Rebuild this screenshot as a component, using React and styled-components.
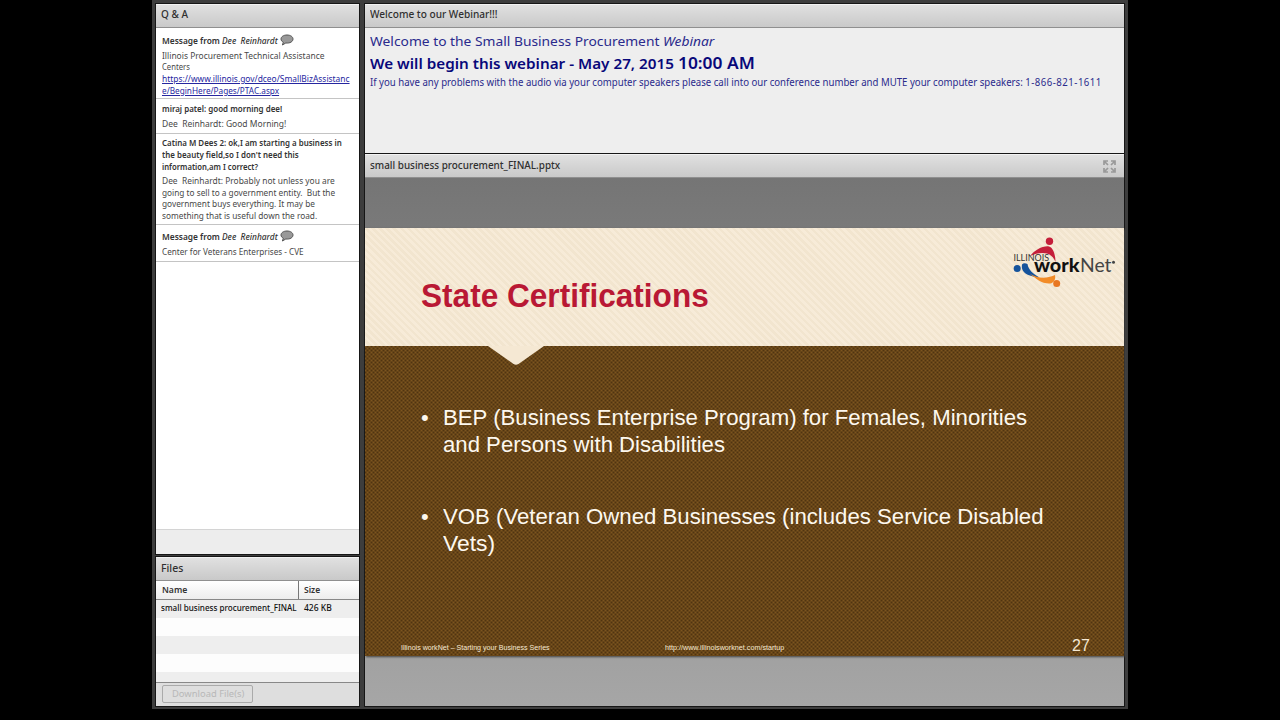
import React from "react";
import styled, { createGlobalStyle } from "styled-components";

const GlobalStyle = createGlobalStyle`
	* {
		box-sizing: border-box;
	}
	body {
		margin: 0;
		background: #000;
		font-family: "Noto Sans", "Open Sans", sans-serif;
	}
	h1, h2, p, ul {
		margin: 0;
		padding: 0;
		font-weight: inherit;
	}
`;

const messages = [
	{
		head: "Message from ",
		sender: "Dee  Reinhardt",
		height: 71,
		top: 7,
		gap: 3,
		lines: [
			{ text: "Illinois Procurement Technical Assistance", w: 162 },
			{ text: "Centers", w: 28 },
			{ text: "https://www.illinois.gov/dceo/SmallBizAssistanc", w: 188, link: true },
			{ text: "e/BeginHere/Pages/PTAC.aspx", w: 117, link: true },
		],
	},
	{
		heads: [{ text: "miraj patel: good morning dee!", w: 120 }],
		height: 35,
		top: 4,
		gap: 3,
		lines: [{ text: "Dee  Reinhardt: Good Morning!", w: 124 }],
	},
	{
		heads: [
			{ text: "Catina M Dees 2: ok,I am starting a business in", w: 180 },
			{ text: "the beauty field,so I don't need this", w: 137 },
			{ text: "information,am I correct?", w: 96 },
		],
		height: 91,
		top: 3.4,
		gap: 2.4,
		lines: [
			{ text: "Dee  Reinhardt: Probably not unless you are", w: 173 },
			{ text: "going to sell to a government entity.  But the", w: 173 },
			{ text: "government buys everything. It may be", w: 153 },
			{ text: "something that is useful down the road.", w: 155 },
		],
	},
	{
		head: "Message from ",
		sender: "Dee  Reinhardt",
		height: 37,
		top: 6,
		gap: 3,
		lines: [{ text: "Center for Veterans Enterprises - CVE", w: 142 }],
	},
];

// one line of text, fitted to a fixed advance width
function Fit({ w, children }) {
	const ref = React.useRef(null);
	const [scale, setScale] = React.useState(1);
	React.useLayoutEffect(() => {
		setScale(w / ref.current.offsetWidth);
	}, [w]);
	return (
		<FitStyled ref={ref} style={{ transform: `scaleX(${scale})` }}>
			{children}
		</FitStyled>
	);
}

function Bubble() {
	return (
		<BubbleIcon viewBox="0 0 14 12">
			<path
				d="M7 1C3.400 1 1 2.800 1 5c0 1.400.900 2.500 2.300 3.200L2.400 11l3.400-2C10 9.500 13 7.600 13 5c0-2.200-2.400-4-6-4z"
				fill="#999"
				stroke="#555"
				strokeWidth="1"
			/>
		</BubbleIcon>
	);
}

function Logo() {
	return (
		<LogoStyled viewBox="0 0 104 54">
			<circle cx="36.500" cy="4.300" r="3.700" fill="#c41e3a" />
			<path d="M17 19C22 13 30 8.500 36 9.500c4 1 6.500 8 6.500 15.500-1.500-4-4-7-8.500-8.500-6-1.500-11 0-17 2.500z" fill="#c41e3a" />
			<circle cx="4.200" cy="31.500" r="3.500" fill="#15539c" />
			<path d="M9 27.500q2-2 5.500-.500c1 6 5 9.500 12 13.500-10-1-19-4-17.500-13z" fill="#15539c" />
			<path d="M17 37c8 4 15 5.500 25 1 1 4-1 8-5 8.500-8 .500-14-5-20-9.500z" fill="#f28c28" />
			<circle cx="43.700" cy="46.500" r="3.500" fill="#e87722" />
			<text x="0.500" y="24.200" fontSize="9" fontFamily="Lato" fill="#333" textLength="35.500" lengthAdjust="spacingAndGlyphs">
				ILLINOIS
			</text>
			<text x="21" y="35.200" fontSize="18" fontWeight="900" fontFamily="Lato" fill="#111" textLength="45.500" lengthAdjust="spacingAndGlyphs">
				work
			</text>
			<text x="67" y="35.200" fontSize="18.500" fontWeight="400" fontFamily="Lato" fill="#444" textLength="31.500" lengthAdjust="spacingAndGlyphs">
				Net
			</text>
			<circle cx="100.500" cy="25.200" r="1.500" fill="#444" />
		</LogoStyled>
	);
}

function Message({ item }) {
	return (
		<MessageStyled $h={item.height} $top={item.top}>
			{item.head && (
				<Question>
					<Fit w={116}>
						{item.head}
						<em>{item.sender}</em>
					</Fit>
					<Bubble />
				</Question>
			)}
			{item.heads &&
				item.heads.map((l) => (
					<Question key={l.text}>
						<Fit w={l.w}>{l.text}</Fit>
					</Question>
				))}
			<Answer $gap={item.gap}>
				{item.lines.map((l) => (
					<AnswerLine key={l.text} $link={l.link}>
						<Fit w={l.w}>{l.text}</Fit>
					</AnswerLine>
				))}
			</Answer>
		</MessageStyled>
	);
}

function App() {
	return (
		<>
			<GlobalStyle />
			<Room>
				<LeftColumn>
					<Pod $h={550}>
						<PodHeader>
							<Fit w={27}>Q &amp; A</Fit>
						</PodHeader>
						<Messages>
							{messages.map((m, i) => (
								<Message key={i} item={m} />
							))}
						</Messages>
						<PodFooter />
					</Pod>
					<Pod $h={149}>
						<PodHeader $low>
							<Fit w={22}>Files</Fit>
						</PodHeader>
						<TableHead>
							<NameCell>
								<Fit w={25}>Name</Fit>
							</NameCell>
							<SizeCell>
								<Fit w={16}>Size</Fit>
							</SizeCell>
						</TableHead>
						<FileRows>
							<FileRow>
								<FileName>
									<Fit w={136}>small business procurement_FINAL</Fit>
								</FileName>
								<FileSize>
									<Fit w={28}>426 KB</Fit>
								</FileSize>
							</FileRow>
						</FileRows>
						<DownloadBar>
							<DownloadButton>
								<Fit w={72}>Download File(s)</Fit>
							</DownloadButton>
						</DownloadBar>
					</Pod>
				</LeftColumn>
				<RightColumn>
					<Pod $h={149}>
						<PodHeader>
							<Fit w={128}>Welcome to our Webinar!!!</Fit>
						</PodHeader>
						<Notice>
							<NoticeLine $size={13} $lh={22}>
								<Fit w={344}>
									Welcome to the Small Business Procurement <em>Webinar</em>
								</Fit>
							</NoticeLine>
							<NoticeLine $size={14.5} $lh={22} $bold>
								<Fit w={385}>
									We will begin this webinar - May 27, 2015 <Time>10:00 AM</Time>
								</Fit>
							</NoticeLine>
							<NoticeLine $size={10} $lh={16}>
								<Fit w={732}>
									If you have any problems with the audio via your computer speakers please call into our
									conference number and MUTE your computer speakers: <Phone>1-866-821-1611</Phone>
								</Fit>
							</NoticeLine>
						</Notice>
					</Pod>
					<Pod $h={552}>
						<PodHeader $low>
							<Fit w={190}>small business procurement_FINAL.pptx</Fit>
							<ExpandIcon viewBox="0 0 13 13">
								<path
									d="M1 5V1h4M1.500 1.500L5 5M8 1h4v4M11.500 1.500L8 5M1 8v4h4M1.500 11.500L5 8M12 8v4H8M11.500 11.500L8 8"
									fill="none"
									stroke="#999"
									strokeWidth="1.700"
								/>
							</ExpandIcon>
						</PodHeader>
						<Stage>
							<Slide>
								<SlideTop>
									<SlideTitle>
										<Fit w={288}>State Certifications</Fit>
									</SlideTitle>
									<Logo />
									<Notch viewBox="0 0 56 20">
										<path d="M0 0h56L30.500 18q-2.500 1.500-5 0z" fill="#f5e8d3" />
									</Notch>
								</SlideTop>
								<SlideBody>
									<Bullet>
										<Dot>•</Dot>
										<div>
											<Fit w={584}>BEP (Business Enterprise Program) for Females, Minorities</Fit>
											<Fit w={282}>and Persons with Disabilities</Fit>
										</div>
									</Bullet>
									<Bullet>
										<Dot>•</Dot>
										<div>
											<Fit w={601}>VOB (Veteran Owned Businesses (includes Service Disabled</Fit>
											<Fit w={52}>Vets)</Fit>
										</div>
									</Bullet>
								</SlideBody>
								<SlideFooter>
									<FooterLeft>
										<Fit w={149}>Illinois workNet – Starting your Business Series</Fit>
									</FooterLeft>
									<FooterMid>
										<Fit w={119}>http://www.illinoisworknet.com/startup</Fit>
									</FooterMid>
									<PageNumber>27</PageNumber>
								</SlideFooter>
							</Slide>
						</Stage>
					</Pod>
				</RightColumn>
			</Room>
		</>
	);
}

const FitStyled = styled.span`
	display: block;
	width: max-content;
	white-space: pre;
	transform-origin: 0 50%;
`;

const Room = styled.div`
	width: 976px;
	height: 709px;
	margin: 0 auto;
	padding: 4px 4px 3px;
	display: flex;
	gap: 6px;
	background: #3d3d3d;
	overflow: hidden;
`;

const LeftColumn = styled.div`
	width: 203px;
	display: flex;
	flex-direction: column;
	gap: 3px;
`;

const RightColumn = styled.div`
	width: 759px;
	display: flex;
	flex-direction: column;
	gap: 1px;
`;

const Pod = styled.section`
	height: ${(props) => props.$h}px;
	display: flex;
	flex-direction: column;
	background: #eee;
	box-shadow: 0 0 0 1px #161616;
`;

const PodHeader = styled.header`
	height: 24px;
	flex: none;
	padding: 0 8px ${(props) => (props.$low ? 1 : 3)}px 5px;
	display: flex;
	align-items: center;
	justify-content: space-between;
	font-size: 10px;
	font-weight: 500;
	line-height: 13px;
	color: #303030;
	background: linear-gradient(#e0e0e0, #c9c9c9);
	border-top: 1px solid #f2f2f2;
	border-bottom: 1px solid #8f8f8f;
`;

const ExpandIcon = styled.svg`
	width: 13px;
	height: 13px;
	margin-top: 1px;
`;

const Messages = styled.div`
	flex: 1;
	background: #fff;
`;

const MessageStyled = styled.div`
	height: ${(props) => props.$h}px;
	padding: ${(props) => props.$top}px 6px 0;
	border-bottom: 1px solid #c4c4c4;
	font-size: 8.5px;
	line-height: 11.7px;
`;

const Question = styled.div`
	display: flex;
	font-weight: 600;
	color: #333;
	em {
		font-weight: 500;
	}
`;

const BubbleIcon = styled.svg`
	width: 14px;
	height: 12px;
	flex: none;
	margin-top: -1px;
	margin-left: auto;
	margin-right: 61px;
`;

const Answer = styled.div`
	margin-top: ${(props) => props.$gap}px;
`;

const AnswerLine = styled.div`
	color: ${(props) => (props.$link ? "#2626a0" : "#484848")};
	text-decoration: ${(props) => (props.$link ? "underline" : "none")};
`;

const PodFooter = styled.div`
	height: 25px;
	border-top: 1px solid #d4d4d4;
	background: #ededed;
`;

const TableHead = styled.div`
	height: 19px;
	display: flex;
	font-size: 9px;
	font-weight: 600;
	line-height: 18px;
	color: #333;
	background: linear-gradient(#fff, #ededed);
	border-bottom: 1px solid #888;
`;

const NameCell = styled.div`
	width: 143px;
	padding-left: 6px;
	border-right: 1px solid #777;
`;

const SizeCell = styled.div`
	padding-left: 5px;
`;

const FileRows = styled.div`
	flex: 1;
	background: repeating-linear-gradient(#eee 0 18px, #fdfdfd 18px 36px);
`;

const FileRow = styled.div`
	height: 18px;
	display: flex;
	font-size: 8.5px;
	font-weight: 500;
	line-height: 16px;
	color: #111;
`;

const FileName = styled.div`
	width: 143px;
	padding-left: 5px;
`;

const FileSize = styled.div`
	padding-left: 5px;
`;

const DownloadBar = styled.div`
	height: 24px;
	padding: 2px 6px;
	background: #dedede;
	border-top: 1px solid #888;
`;

const DownloadButton = styled.div`
	width: 91px;
	height: 18px;
	padding-left: 9px;
	border: 1px solid #aaa;
	border-radius: 2px;
	font-size: 9px;
	line-height: 16px;
	color: #b8b8b8;
`;

const Notice = styled.div`
	padding: 2px 5px;
	color: #2a2a8c;
`;

const NoticeLine = styled.p`
	height: ${(props) => props.$lh}px;
	font-size: ${(props) => props.$size}px;
	line-height: ${(props) => props.$lh}px;
	font-weight: ${(props) => (props.$bold ? 600 : 400)};
	color: ${(props) => (props.$bold ? "#08087a" : "inherit")};
`;

const Time = styled.span`
	font-size: 16.5px;
	line-height: 1;
`;

const Phone = styled.span`
	letter-spacing: 0.5px;
`;

const Stage = styled.div`
	flex: 1;
	padding-top: 50px;
	background: linear-gradient(#757575, #a6a6a6);
`;

const Slide = styled.div`
	height: 428px;
	display: flex;
	flex-direction: column;
	font-family: "Liberation Sans", Arial, sans-serif;
	color: #fff;
	background-color: #7c551f;
	background-image: radial-gradient(circle, rgba(45, 25, 4, 0.7) 0.6px, transparent 1.1px),
		radial-gradient(circle, rgba(45, 25, 4, 0.7) 0.6px, transparent 1.1px);
	background-size: 4px 4px;
	background-position: 0.5px 0.5px, 2.5px 2.5px;
	box-shadow: 1px 1px 2px #444;
`;

const SlideTop = styled.div`
	position: relative;
	height: 118px;
	padding: 49px 7px 0 56px;
	display: flex;
	justify-content: space-between;
	background: repeating-linear-gradient(45deg, #f7ebd8 0 2.5px, #f2e5cf 2.5px 5px);
`;

const SlideTitle = styled.h1`
	font-size: 33px;
	line-height: 38px;
	font-weight: 700;
	color: #b91834;
`;

const LogoStyled = styled.svg`
	width: 104px;
	height: 54px;
	margin-top: -40.5px;
	overflow: visible;
`;

const Notch = styled.svg`
	position: absolute;
	left: 123px;
	top: 118px;
	width: 56px;
	height: 20px;
`;

const SlideBody = styled.ul`
	flex: 1;
	padding: 59px 0 0 56px;
`;

const Bullet = styled.li`
	height: 99px;
	display: flex;
	font-size: 22px;
	line-height: 26.5px;
	color: #fdf8ef;
`;

const Dot = styled.span`
	width: 22px;
`;

const SlideFooter = styled.div`
	height: 22px;
	padding-left: 36px;
	display: flex;
	font-size: 7px;
	line-height: 28px;
	color: #f5e8d3;
`;

const FooterLeft = styled.div`
	width: 264px;
`;

const FooterMid = styled.div`
	width: 407px;
`;

const PageNumber = styled.div`
	font-size: 16px;
	line-height: 24px;
`;

export default App;
